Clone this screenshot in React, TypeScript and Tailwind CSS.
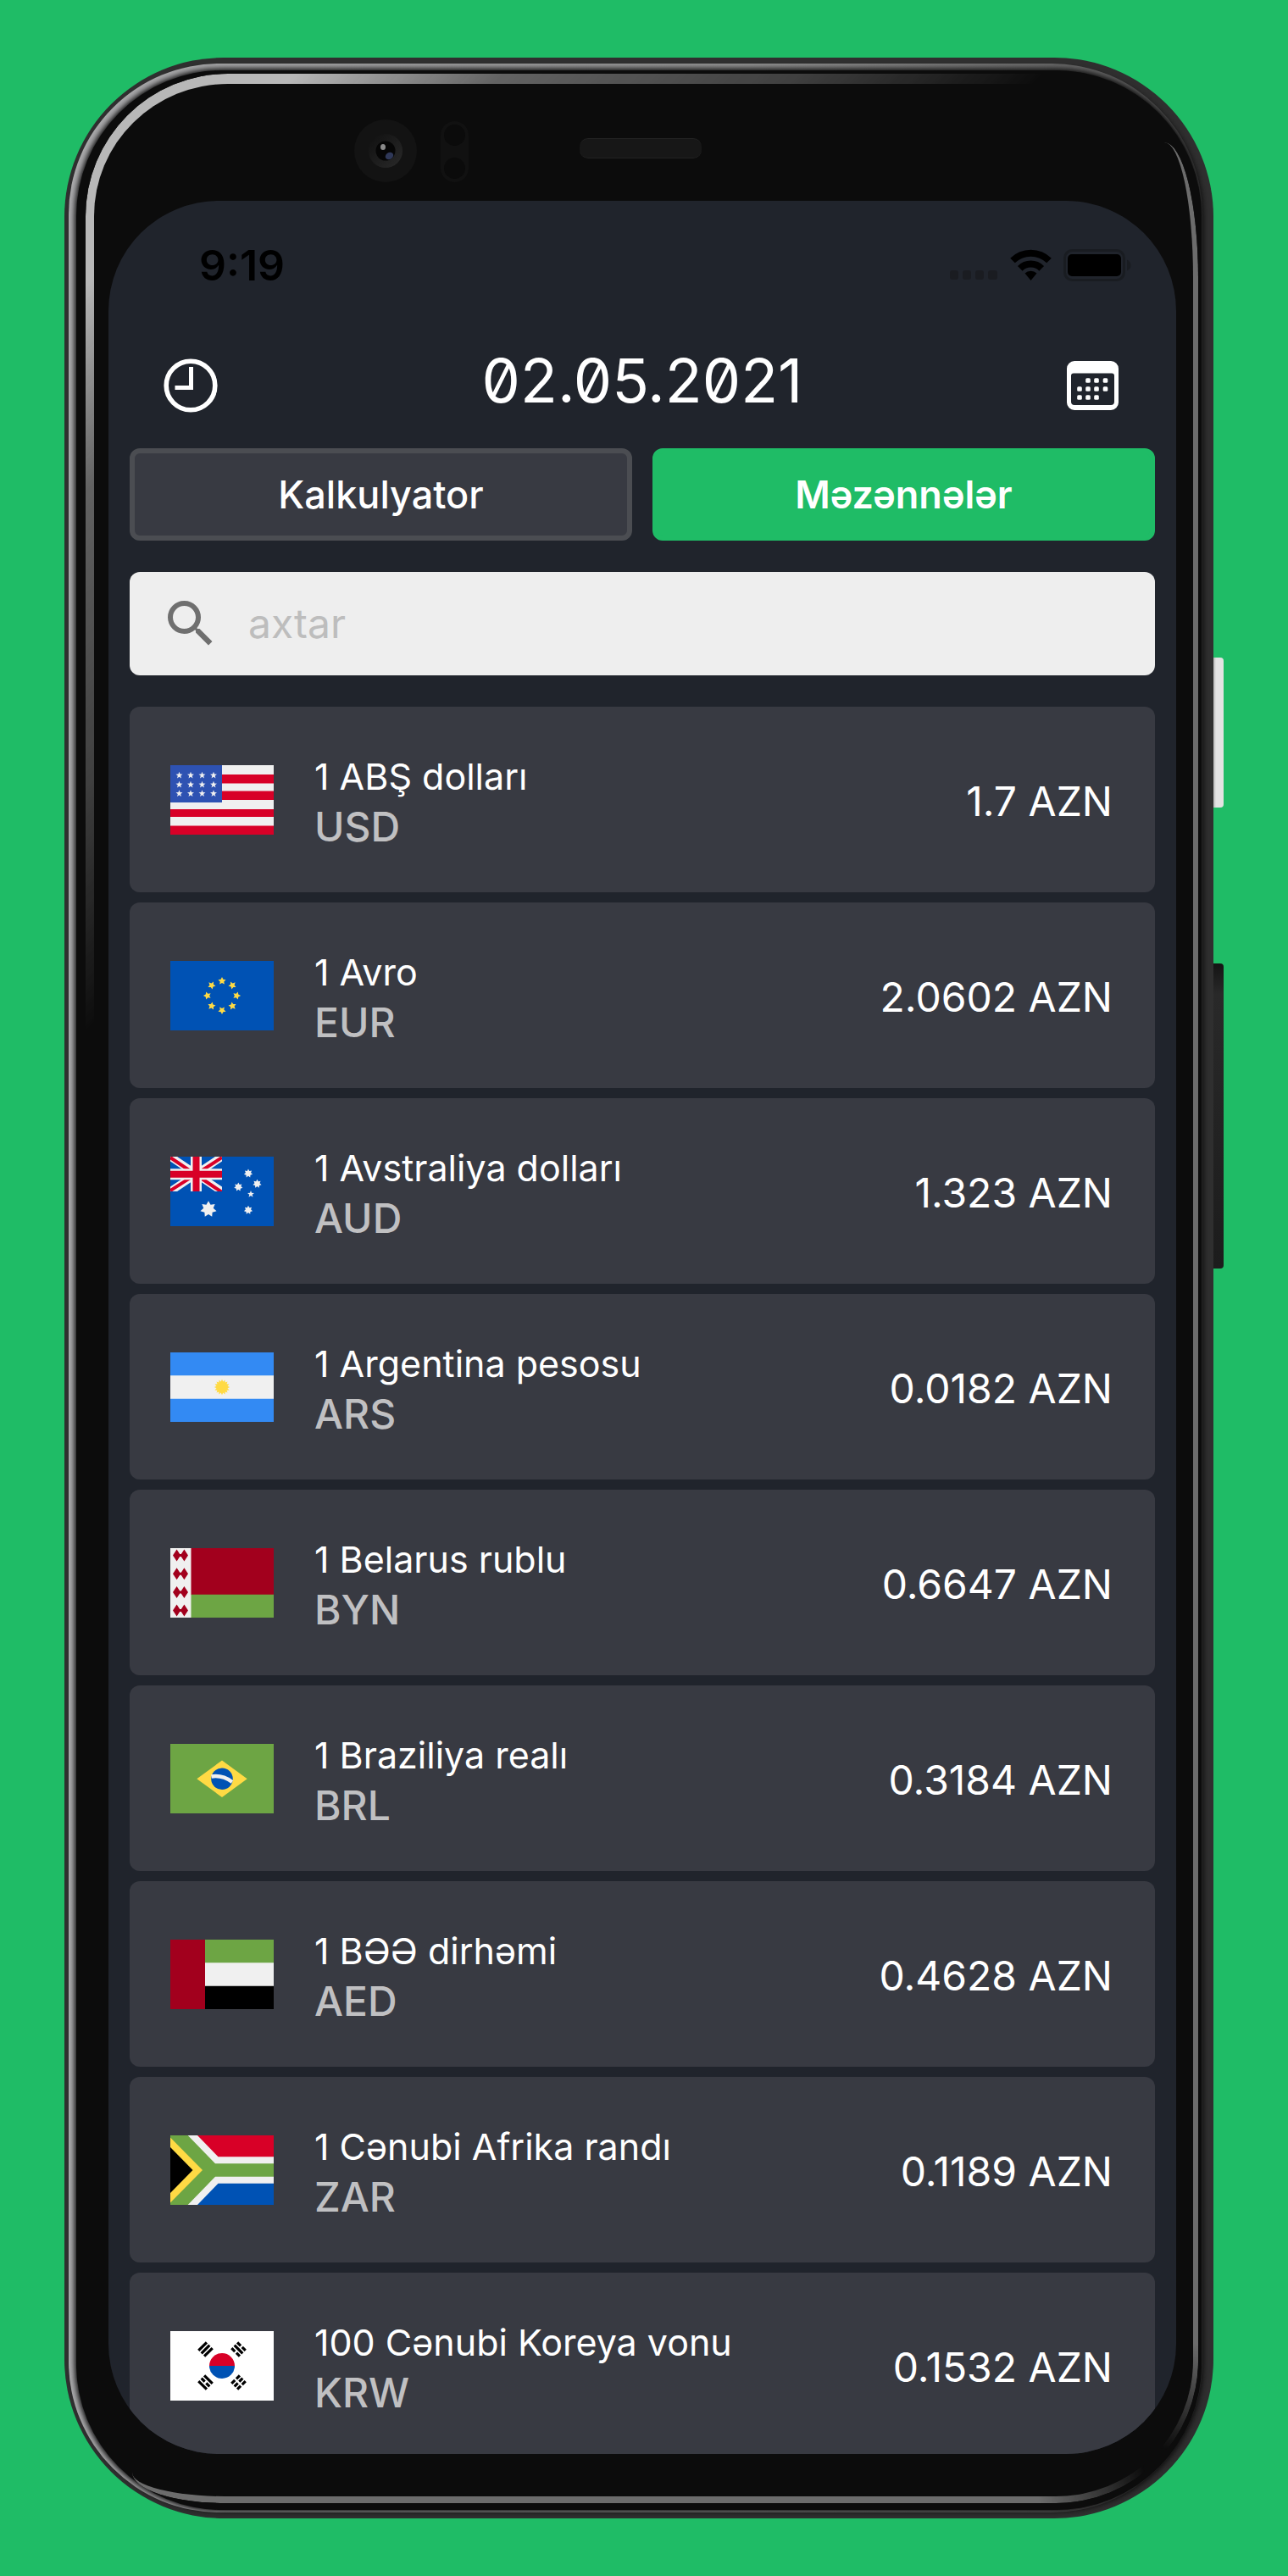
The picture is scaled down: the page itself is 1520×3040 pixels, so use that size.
import { useState, type ReactNode } from "react";
import { MdSearch } from "react-icons/md";

function star(cx: number, cy: number, r: number, points = 5, inner = 0.42, turn = 0) {
  const out: string[] = [];
  for (let i = 0; i < points * 2; i++) {
    const a = turn - Math.PI / 2 + (i * Math.PI) / points;
    const d = i % 2 ? r * inner : r;
    out.push(`${(cx + d * Math.cos(a)).toFixed(2)},${(cy + d * Math.sin(a)).toFixed(2)}`);
  }
  return out.join(" ");
}

const flags: Record<string, ReactNode> = {
  USD: (
    <>
      <path fill="#f0f0f0" d="M0 0h122v82H0z" />
      <path fill="#d80027" d="M0 11h122v10.5H0zM0 30.5h122V41H0zM0 52h122v9H0zM0 71.500h122V82H0z" />
      <path fill="#2e52b2" d="M0 0h61v44H0z" />
      {[12, 23, 33.5].map((y) =>
        [10.5, 24, 37.5, 51].map((x) => <polygon key={`${x}-${y}`} fill="#f0f0f0" points={star(x, y, 4.2)} />),
      )}
    </>
  ),
  EUR: (
    <>
      <path fill="#0052b4" d="M0 0h122v82H0z" />
      {[0, 1, 2, 3, 4, 5, 6, 7].map((i) => {
        const a = (i * Math.PI) / 4;
        return (
          <polygon
            key={i}
            fill="#ffda44"
            points={star(61 + 17.3 * Math.sin(a), 41 - 17.3 * Math.cos(a), 4.8, 5, 0.5, a)}
          />
        );
      })}
    </>
  ),
  AUD: (
    <>
      <path fill="#0052b4" d="M0 0h122v82H0z" />
      <svg width="61" height="41" viewBox="0 0 61 41">
        <path stroke="#f0f0f0" strokeWidth="9" d="M0 0l61 41M61 0L0 41" />
        <path stroke="#d80027" strokeWidth="4" d="M0 2l61 41M61 2L0 41" transform="translate(0 -1)" />
        <path stroke="#f0f0f0" strokeWidth="13" d="M30.500 0v41M0 20.700h61" />
        <path stroke="#d80027" strokeWidth="8" d="M30.500 0v41M0 20.700h61" />
      </svg>
      <g fill="#f0f0f0">
        <polygon points={star(45, 62, 9.8, 7, 0.6)} />
        <polygon points={star(92, 19.7, 5.2, 7, 0.6)} />
        <polygon points={star(80.3, 35.7, 5.2, 7, 0.6)} />
        <polygon points={star(102.5, 32, 5.2, 7, 0.6)} />
        <polygon points={star(92, 63, 5.2, 7, 0.6)} />
        <polygon points={star(95, 44.3, 4.2)} />
      </g>
    </>
  ),
  ARS: (
    <>
      <path fill="#338af3" d="M0 0h122v82H0z" />
      <path fill="#f0f0f0" d="M0 27.300h122v27.400H0z" />
      <polygon fill="#ffda44" points={star(61, 41, 9.2, 16, 0.72)} />
    </>
  ),
  BYN: (
    <>
      <path fill="#f0f0f0" d="M0 0h25v82H0z" />
      <path fill="#a2001d" d="M24.500 0H122v55H24.500z" />
      <path fill="#6da544" d="M24.500 54.700H122V82H24.500z" />
      {[8.5, 30.2, 52, 73.5].map((y) => (
        <path
          key={y}
          fill="#a2001d"
          d={`M3 ${y}l4.600-7 3.600 5.500h1.600l3.600-5.500 4.600 7-4.600 7-3.600-5.500h-1.600l-3.600 5.500z`}
        />
      ))}
    </>
  ),
  BRL: (
    <>
      <path fill="#6da544" d="M0 0h122v82H0z" />
      <path fill="#ffda44" d="M61 19.500L90.700 41.300 61 63 31.300 41.300z" />
      <circle cx="61" cy="41.300" r="12.800" fill="#0052b4" />
      <path fill="none" stroke="#f0f0f0" strokeWidth="4.500" d="M48.500 38.500q13-2 24.500 6.500" />
    </>
  ),
  AED: (
    <>
      <path fill="#6da544" d="M0 0h122v28H0z" />
      <path fill="#f0f0f0" d="M0 27.300h122v28H0z" />
      <path fill="#000" d="M0 54.700h122V82H0z" />
      <path fill="#a2001d" d="M0 0h41v82H0z" />
    </>
  ),
  ZAR: (
    <>
      <path fill="#f0f0f0" d="M0 0h122v82H0z" />
      <path fill="#d80027" d="M32 0h90v25.300H56.500z" />
      <path fill="#0052b4" d="M32 82h90V56.700H56.500z" />
      <path fill="#6da544" d="M0 0h20.700L53 33.300h69v15.400H53L20.700 82H0z" />
      <path fill="#ffda44" d="M0 2.500L38 41 0 79.500z" />
      <path fill="#000" d="M0 14l26.500 27L0 68z" />
    </>
  ),
  KRW: (
    <>
      <path fill="#fff" d="M0 0h122v82H0z" />
      <path fill="#d80027" d="M46 41a15 15 0 0 1 30 0z" />
      <path fill="#0052b4" d="M46 41a15 15 0 0 0 30 0z" />
      <g stroke="#000" strokeWidth="3.200">
        <path d="M-6.800-4.800h13.600M-6.800 0h13.600M-6.800 4.800h13.600" transform="translate(41.500 21.500) rotate(-45)" />
        <path d="M-6.800-4.800h5.600m2.400 0h5.600M-6.800 0h13.600M-6.800 4.800h5.600m2.400 0h5.600" transform="translate(80.500 21.500) rotate(45)" />
        <path d="M-6.800-4.800h13.600M-6.800 0h5.600m2.400 0h5.600M-6.800 4.800h13.600" transform="translate(41.500 60.500) rotate(45)" />
        <path d="M-6.800-4.800h5.600m2.400 0h5.600M-6.800 0h5.600m2.400 0h5.600M-6.800 4.800h5.600m2.400 0h5.600" transform="translate(80.500 60.500) rotate(-45)" />
      </g>
    </>
  ),
};

const rates = [
  { code: "USD", name: "1 ABŞ dolları", value: "1.7 AZN" },
  { code: "EUR", name: "1 Avro", value: "2.0602 AZN" },
  { code: "AUD", name: "1 Avstraliya dolları", value: "1.323 AZN" },
  { code: "ARS", name: "1 Argentina pesosu", value: "0.0182 AZN" },
  { code: "BYN", name: "1 Belarus rublu", value: "0.6647 AZN" },
  { code: "BRL", name: "1 Braziliya realı", value: "0.3184 AZN" },
  { code: "AED", name: "1 BƏƏ dirhəmi", value: "0.4628 AZN" },
  { code: "ZAR", name: "1 Cənubi Afrika randı", value: "0.1189 AZN" },
  { code: "KRW", name: "100 Cənubi Koreya vonu", value: "0.1532 AZN" },
];

function ClockIcon() {
  return (
    <svg className="size-16" viewBox="0 0 64 64" fill="none" stroke="#fff" aria-hidden="true">
      <circle cx="32" cy="32" r="28.800" strokeWidth="5.600" />
      <path strokeWidth="5" d="M32.500 10v24.500H13.500" />
    </svg>
  );
}

function CalendarIcon() {
  const dots = [
    [25, 23], [35, 23], [45.5, 23],
    [15, 33], [25, 33], [35, 33], [45.5, 33],
    [15, 43], [25, 43], [35, 43],
  ];
  return (
    <svg className="h-[58px] w-[61px]" viewBox="0 0 61 58" fill="#fff" aria-hidden="true">
      <path
        fillRule="evenodd"
        d="M9 0h43a9 9 0 0 1 9 9v40a9 9 0 0 1-9 9H9a9 9 0 0 1-9-9V9a9 9 0 0 1 9-9zM8 14.500a3 3 0 0 0-3 3V48a4 4 0 0 0 4 4h43a4 4 0 0 0 4-4V17.500a3 3 0 0 0-3-3z"
      />
      {dots.map(([x, y]) => (
        <rect key={`${x}-${y}`} x={x - 2.8} y={y - 2.8} width="5.600" height="5.600" rx="1.500" />
      ))}
    </svg>
  );
}

function StatusBar() {
  return (
    <div className="flex items-center justify-between pr-[52px] pl-[107px] text-black">
      <time className="text-[50px] leading-[60px] font-semibold">9:19</time>
      <div className="flex items-center">
        <svg className="h-[38px] w-[57px]" viewBox="0 0 57 38" fill="#1a1c21" aria-hidden="true">
          <rect x="0" y="25" width="10" height="11" rx="3" />
          <rect x="15" y="25" width="10" height="11" rx="3" />
          <rect x="30" y="25" width="10" height="11" rx="3" />
          <rect x="45" y="25" width="11" height="11" rx="3" />
        </svg>
        <svg className="ml-3.5 h-[38px] w-[49px]" viewBox="0 0 49 38" fill="none" stroke="#000" aria-hidden="true">
          <path strokeWidth="8" d="M3 13.500a30.500 30.500 0 0 1 43 0" />
          <path strokeWidth="8" d="M11.800 22.800a18 18 0 0 1 25.400 0" />
          <path fill="#000" stroke="none" d="M24.500 37l-7-8.500a10 10 0 0 1 14 0z" />
        </svg>
        <svg className="ml-3.5 h-[38px] w-[81px]" viewBox="0 0 81 38" aria-hidden="true">
          <rect x="1.500" y="1.500" width="70" height="35" rx="9" fill="none" stroke="#191c21" strokeWidth="3" />
          <rect x="5" y="6" width="63" height="26" rx="5" fill="#000" />
          <path fill="#191c21" d="M75 12.500q4.500 2 4.500 6.500t-4.500 6.500z" />
        </svg>
      </div>
    </div>
  );
}

function Bezel() {
  return (
    <div aria-hidden="true" className="pointer-events-none absolute inset-0">
      <div className="absolute inset-y-[7px] right-[13px] left-[5px] rounded-[178px] bg-linear-to-r from-[#aaaaac] via-[#8f8f8f] via-60% to-[#555]" />
      <div className="absolute top-[15px] right-[14px] bottom-[10px] left-[14px] rounded-[172px] bg-[#0c0c0c] shadow-[0_0_6px_2px_#0c0c0c]" />
      <div className="absolute top-[19px] right-[18px] left-[25px] h-[40%] rounded-tl-[168px] rounded-tr-[168px] border-t-12 border-l-10 border-[#b8b8b8] mask-[linear-gradient(135deg,#000_10%,rgba(0,0,0,0.5)_20%,rgba(0,0,0,0.3)_34%,transparent_46%)]" />
      <div className="absolute top-[100px] right-[18px] bottom-[18px] left-[80px] rounded-tr-[40px_160px] rounded-br-[168px] rounded-bl-[110px_36px] border-r-6 border-b-8 border-[#6c6c6c] mask-[radial-gradient(circle_at_calc(100%-44px)_calc(100%-44px),transparent_20px,#000_150px)]" />
      <div className="absolute top-[73px] left-[342px] flex size-[74px] items-center justify-center rounded-full bg-[#131313]">
        <div className="flex size-[40px] items-center justify-center rounded-full bg-linear-to-br from-[#101010] to-[#2a2a2a]">
          <svg className="size-[24px]" viewBox="0 0 24 24">
            <circle cx="12" cy="12" r="11.500" fill="#060606" />
            <ellipse cx="9" cy="7.500" rx="3" ry="3.500" fill="#8a8a8a" />
            <ellipse cx="16.500" cy="18" rx="5" ry="4" fill="#2f3858" transform="rotate(-35 16.500 18)" />
          </svg>
        </div>
      </div>
      <div className="absolute top-[75px] left-[444px] flex h-[72px] w-[33px] flex-col items-center justify-between rounded-full bg-[#111] p-1">
        <span className="size-[25px] rounded-full bg-[#0b0b0b]" />
        <span className="size-[25px] rounded-full bg-[#0b0b0b]" />
      </div>
      <div className="absolute inset-x-0 top-[95px] flex justify-center pl-1">
        <div className="h-[24px] w-[144px] rounded-[10px] border-y border-[#222] bg-[#171717]" />
      </div>
      <div className="absolute top-[708px] left-full h-[177px] w-[12px] rounded-r-sm bg-linear-to-r from-[#b5b5b5] to-[#e3e3e3] to-25%" />
      <div className="absolute top-[1069px] left-full h-[360px] w-[12px] rounded-r-sm bg-linear-to-b from-[#141414] via-[#292929] via-10% to-[#1c1c1c]" />
    </div>
  );
}

export default function App() {
  const [tab, setTab] = useState("rates");
  const [query, setQuery] = useState("");
  const shown = rates.filter((r) => `${r.name} ${r.code}`.toLowerCase().includes(query.toLowerCase()));
  const tabs = [
    { id: "calc", label: "Kalkulyator" },
    { id: "rates", label: "Məzənnələr" },
  ];

  return (
    <div className="min-h-screen bg-[#1fbc66] py-[68px] pr-[88px] pl-[76px] font-['Inter',sans-serif]">
      <div className="relative rounded-[188px] bg-[#2f2f2f] pt-[169px] pr-[44px] pb-[76px] pl-[52px]">
        <Bezel />
        <main className="relative overflow-hidden rounded-[130px] bg-[#20242c] pt-[46px]">
          <StatusBar />
          <div className="px-[25px]">
            <header className="mt-20 flex h-[64px] items-center justify-between pr-[43px] pl-10">
              <button type="button" aria-label="Tarixçə">
                <ClockIcon />
              </button>
              <h1 className="pb-3 text-[72px] leading-[64px] font-normal text-white [font-feature-settings:'zero']">
                02.05.2021
              </h1>
              <button type="button" aria-label="Təqvim">
                <CalendarIcon />
              </button>
            </header>

            <div className="mt-[42px] grid grid-cols-2 gap-6" role="tablist">
              {tabs.map((t) => (
                <button
                  key={t.id}
                  type="button"
                  role="tab"
                  aria-selected={tab === t.id}
                  onClick={() => setTab(t.id)}
                  className={
                    tab === t.id
                      ? "h-[109px] rounded-xl border-6 border-[#1fbc66] bg-[#1fbc66] text-[45px] font-semibold text-white"
                      : "h-[109px] rounded-xl border-6 border-[#4b4d52] bg-[#383a42] text-[45px] font-medium text-white"
                  }
                >
                  {t.label}
                </button>
              ))}
            </div>

            <label className="mt-[37px] flex h-[122px] items-center gap-8 rounded-xl bg-[#eee] px-9">
              <MdSearch className="size-[72px] shrink-0 text-[#6f6f6f]" aria-hidden="true" />
              <input
                type="text"
                value={query}
                onChange={(e) => setQuery(e.target.value)}
                placeholder="axtar"
                aria-label="axtar"
                className="w-full min-w-0 bg-transparent text-[48px] text-[#333] outline-none placeholder:text-[#bdbdbd]"
              />
            </label>

            <ul className="mt-[37px] -mb-[5px] flex flex-col gap-3">
              {shown.map((r) => (
                <li key={r.code} className="flex h-[219px] items-center rounded-xl bg-[#383a42] pr-[50px] pl-12">
                  <svg className="h-[82px] w-[122px] shrink-0" viewBox="0 0 122 82" role="img" aria-label={r.code}>
                    {flags[r.code]}
                  </svg>
                  <div className="ml-12 flex flex-1 flex-col pt-1">
                    <span className="text-[43px] leading-[60px] text-white">{r.name}</span>
                    <span className="text-[48px] leading-[60px] font-medium text-[#c0c0c2]">{r.code}</span>
                  </div>
                  <span className="pt-1 text-[48px] text-white">{r.value}</span>
                </li>
              ))}
            </ul>
          </div>
        </main>
      </div>
    </div>
  );
}
